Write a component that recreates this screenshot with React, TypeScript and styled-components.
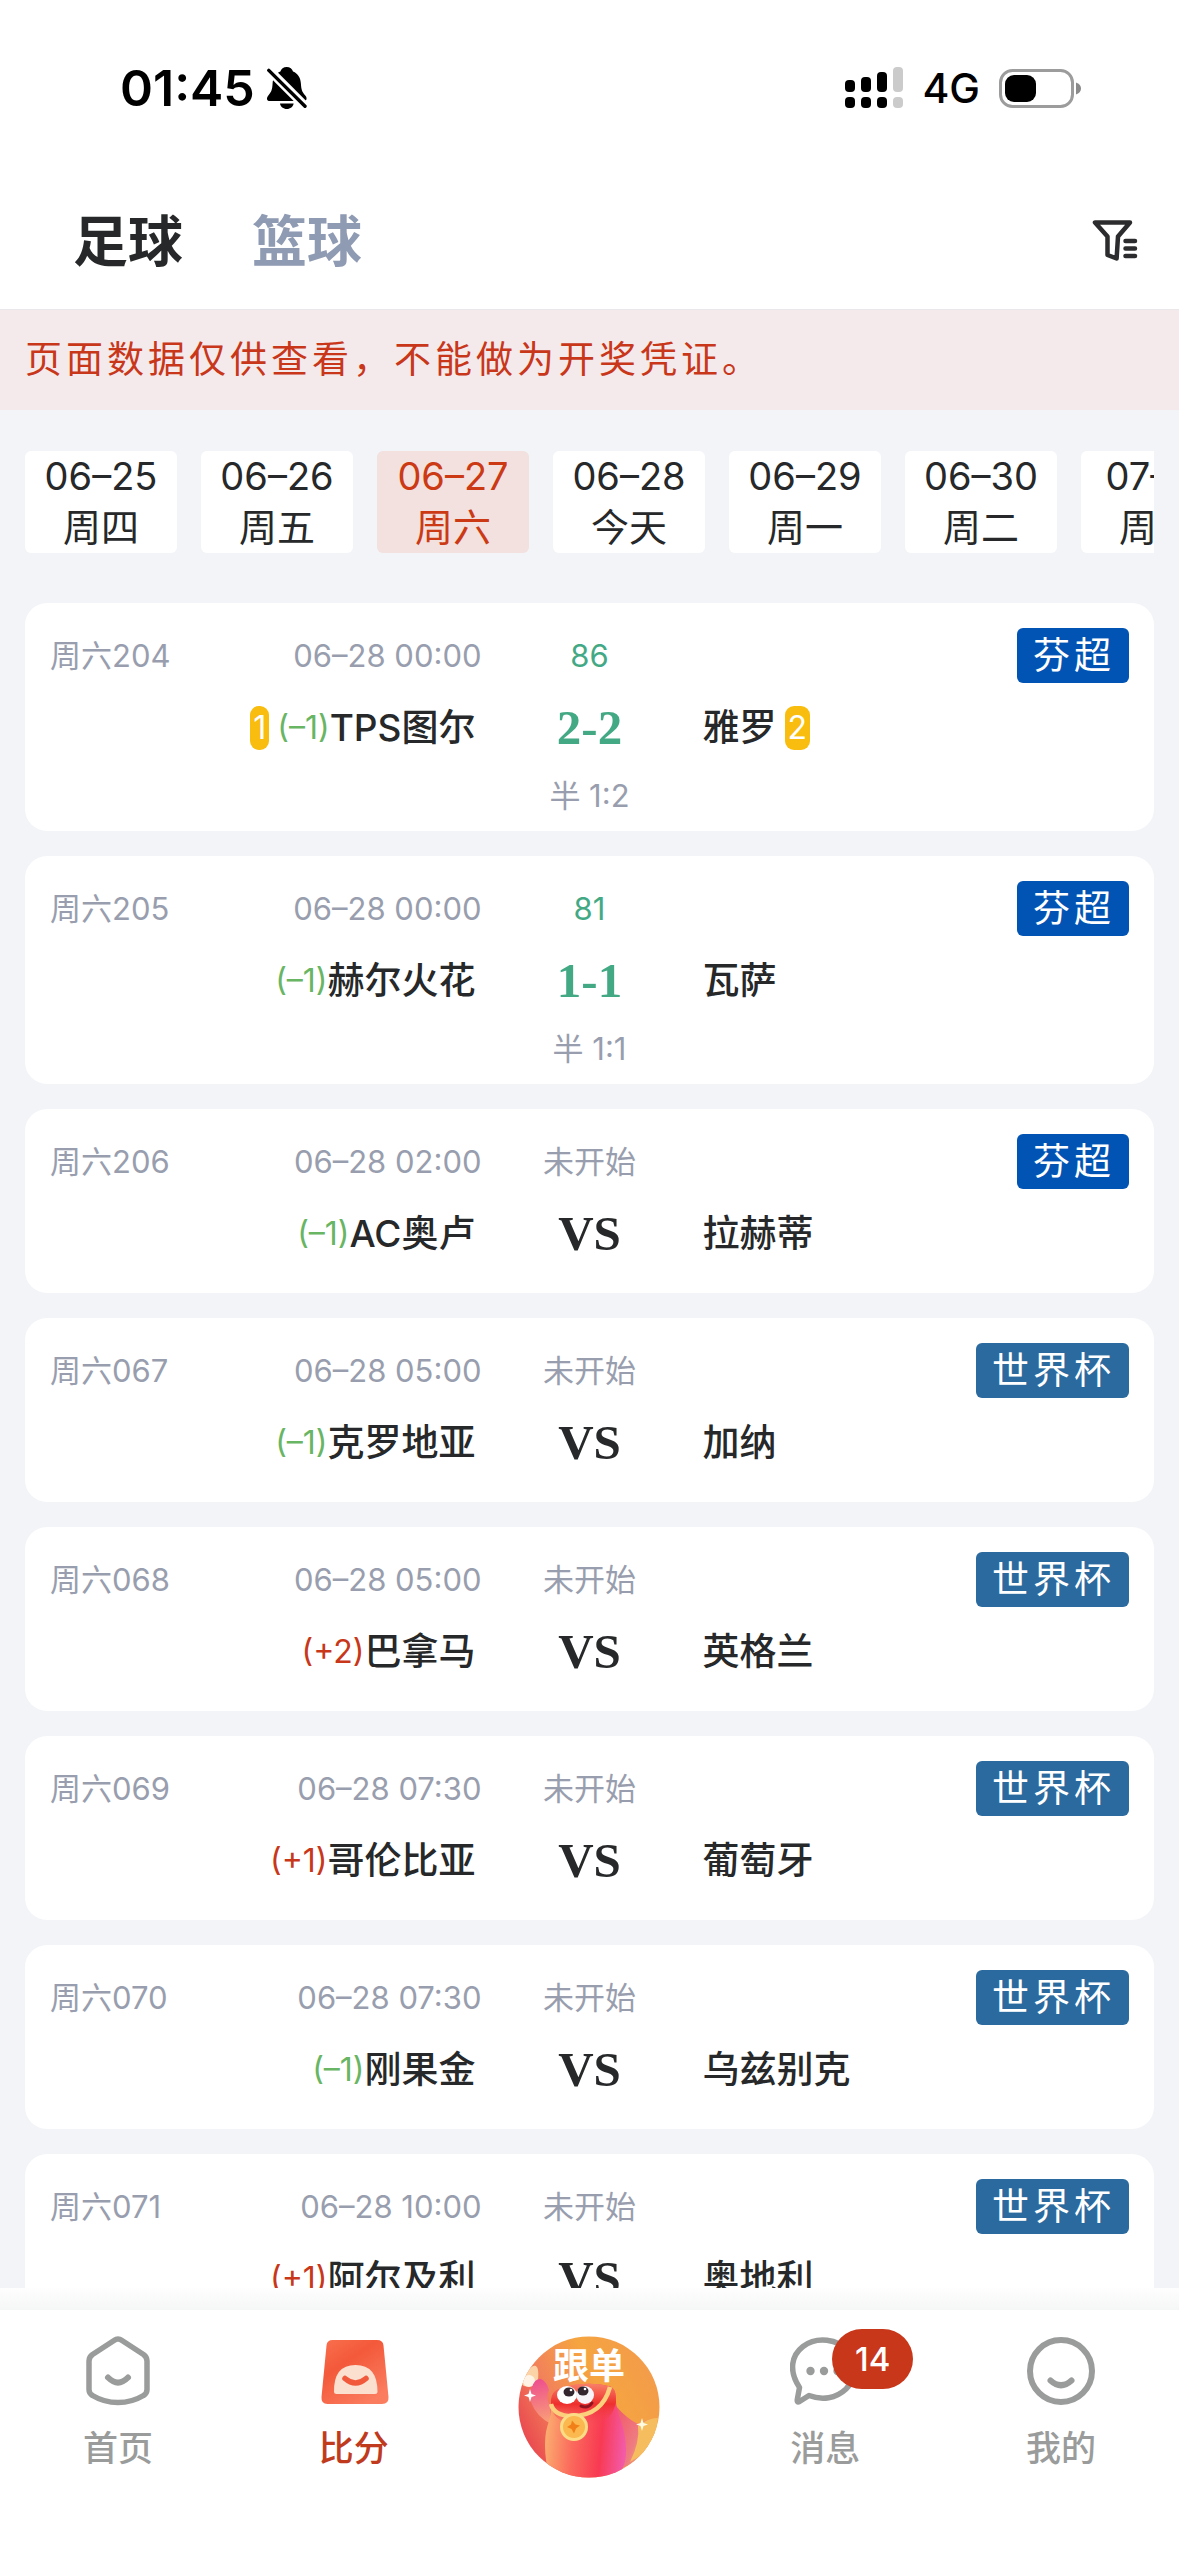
import React, { useState } from "react";
import styled, { createGlobalStyle, css } from "styled-components";

const colors = {
  ink: "#262829",
  muted: "#989eae",
  tabIdle: "#8f9bb3",
  red: "#c8371a",
  green: "#43a985",
  handicapDown: "#68b563",
  page: "#f3f4f8",
  nav: "#9a9c9b",
};

const GlobalStyle = createGlobalStyle`
  *, *::before, *::after { box-sizing: border-box; }
  body {
    margin: 0;
    background: ${colors.page};
    color: ${colors.ink};
    font-family: Inter, "Noto Sans CJK SC", sans-serif;
  }
  button { font: inherit; border: 0; padding: 0; background: none; color: inherit; cursor: pointer; }
  a { color: inherit; text-decoration: none; }
  ul { list-style: none; margin: 0; padding: 0; }
  svg { display: block; flex: none; }
`;

const Screen = styled.div`
  display: flex;
  flex-direction: column;
  height: 100vh;
  overflow: hidden;
`;

/* ---------- status bar ---------- */

const StatusBar = styled.div`
  display: flex;
  justify-content: space-between;
  align-items: center;
  flex: none;
  height: 176px;
  padding: 0 98px 0 120px;
  background: #fff;
  color: #000;
`;

const StatusGroup = styled.div<{ $gap: number }>`
  display: flex;
  align-items: center;
  gap: ${(p) => p.$gap}px;
`;

const Clock = styled.time`
  font-size: 50px;
  line-height: 60px;
  font-weight: 600;
`;

const Network = styled.span`
  font-size: 41px;
  line-height: 50px;
  font-weight: 500;
`;

/* ---------- header ---------- */

const Header = styled.header`
  display: flex;
  justify-content: space-between;
  align-items: center;
  flex: none;
  height: 134px;
  padding: 0 39px 4px 73px;
  background: #fff;
  border-bottom: 1px solid #e9e7ea;
`;

const SportTabs = styled.nav`
  display: flex;
  gap: 69px;
`;

const SportTab = styled.button<{ $active: boolean }>`
  font-size: 55px;
  line-height: 80px;
  font-weight: 700;
  color: ${(p) => (p.$active ? colors.ink : colors.tabIdle)};
`;

const Notice = styled.p`
  flex: none;
  margin: 0;
  padding: 0 25px;
  background: #f4eaec;
  color: ${colors.red};
  font-size: 37px;
  line-height: 100px;
  letter-spacing: 4px;
`;

/* ---------- content ---------- */

const Main = styled.main`
  flex: 1;
  min-height: 0;
  padding: 41px 25px 0;
  overflow: auto;
  scrollbar-width: none;
`;

const DateStrip = styled.div`
  display: flex;
  gap: 24px;
  margin-bottom: 50px;
  overflow-x: auto;
  scrollbar-width: none;
`;

const DateChip = styled.button<{ $active: boolean }>`
  display: flex;
  flex-direction: column;
  align-items: center;
  flex: none;
  width: 152px;
  border-radius: 6px;
  font-size: 38px;
  line-height: 51px;
  background: ${(p) => (p.$active ? "#f2e1de" : "#fff")};
  color: ${(p) => (p.$active ? "#cb3a14" : colors.ink)};
`;

const MatchList = styled.ul`
  display: flex;
  flex-direction: column;
  gap: 25px;
`;

const Card = styled.li`
  padding: 25px 25px 16px;
  border-radius: 22px;
  background: #fff;
`;

const columns = css`
  display: grid;
  grid-template-columns: 1fr 216px 1fr;
  align-items: center;
`;

const InfoRow = styled.div`
  ${columns}
  height: 55px;
  font-size: 31px;
  line-height: 44px;
  color: ${colors.muted};
`;

const TeamsRow = styled.div`
  ${columns}
  height: 88px;
  padding-top: 1px;
`;

const IdAndTime = styled.div`
  display: flex;
  justify-content: space-between;
`;

const Phase = styled.span<{ $live: boolean }>`
  text-align: center;
  color: ${(p) => (p.$live ? colors.green : colors.muted)};
`;

const League = styled.span<{ $color: string }>`
  justify-self: end;
  padding: 0 14px 0 16px;
  border-radius: 6px;
  background: ${(p) => p.$color};
  color: #fff;
  font-size: 37px;
  line-height: 55px;
  letter-spacing: 4px;
`;

const Team = styled.div<{ $side: "home" | "away" }>`
  display: flex;
  align-items: center;
  justify-content: ${(p) => (p.$side === "home" ? "flex-end" : "flex-start")};
  padding: ${(p) => (p.$side === "home" ? "0 6px 0 0" : "0 0 0 5px")};
  white-space: nowrap;
`;

const TeamName = styled.span`
  font-size: 37px;
  line-height: 54px;
  font-weight: 500;
`;

const Handicap = styled.span<{ $up: boolean }>`
  font-size: 32px;
  line-height: 44px;
  color: ${(p) => (p.$up ? colors.red : colors.handicapDown)};
`;

const YellowCards = styled.span`
  margin: 0 8px;
  padding: 0 3px;
  border-radius: 9px;
  background: #f8bd0e;
  color: #fff;
  font-size: 32px;
  line-height: 44px;
`;

const Score = styled.strong<{ $live: boolean }>`
  text-align: center;
  font-family: "Liberation Serif", "Times New Roman", serif;
  font-size: 49px;
  line-height: 60px;
  font-weight: 700;
  color: ${(p) => (p.$live ? colors.green : colors.ink)};
`;

const HalfTime = styled.div`
  padding-top: 6px;
  text-align: center;
  font-size: 31px;
  line-height: 38px;
  color: ${colors.muted};
`;

/* ---------- bottom bar ---------- */

const BottomBar = styled.footer`
  flex: none;
  background: #fff;
`;

const BarShade = styled.div`
  height: 22px;
  background: linear-gradient(#fefefe, #f5f6f6);
`;

const BarItems = styled.nav`
  display: grid;
  grid-template-columns: repeat(5, 1fr);
  justify-items: center;
  align-items: start;
  padding: 26px 0 78px;
`;

const BarLink = styled.a<{ $active?: boolean }>`
  display: flex;
  flex-direction: column;
  align-items: center;
  gap: 19px;
  font-size: 35px;
  line-height: 46px;
  font-weight: 500;
  color: ${(p) => (p.$active ? "#c03a1e" : colors.nav)};
`;

const IconSlot = styled.span`
  position: relative;
`;

const Unread = styled.span`
  position: absolute;
  top: -7px;
  left: 42px;
  width: 81px;
  border-radius: 30px;
  background: ${colors.red};
  color: #fff;
  text-align: center;
  font-size: 33px;
  line-height: 60px;
`;

/* ---------- drawings ---------- */

const MutedBell = () => (
  <svg width="40" height="42" viewBox="0 0 40 42" aria-hidden="true">
    <path
      d="M19.7 0c3.2 0 5.6 2 6.3 4.6 5 2 7.6 6.4 7.9 12 .3 6 1.3 8.6 4.1 11.6 1.2 1.3 1.7 2.4 1.5 3.7-.2 1.4-1.2 2.1-2.8 2.1H2.8C1.2 34 .2 33.3 0 31.9c-.2-1.3.4-2.4 1.5-3.7C4.3 25.2 5.3 22.6 5.6 16.6c.3-5.6 2.9-10 7.8-12C14.1 2 16.5 0 19.7 0z"
      fill="#000"
    />
    <path d="M13 36.5h13.6c-.5 3.2-3.3 5.5-6.8 5.5S13.5 39.7 13 36.5z" fill="#000" />
    <path d="M-1 0 42 43" stroke="#fff" strokeWidth="9" />
    <path d="M1.8 3.4 38 39.3" stroke="#000" strokeWidth="3.4" strokeLinecap="round" />
  </svg>
);

const Signal = () => (
  <svg width="58" height="42" viewBox="0 0 58 42" aria-hidden="true">
    <g fill="#000">
      <rect x="0" y="13" width="10" height="12" rx="4" />
      <rect x="16" y="10" width="10" height="15" rx="4" />
      <rect x="32" y="5" width="10" height="20" rx="4" />
      <rect x="0" y="30" width="10" height="11" rx="4" />
      <rect x="16" y="30" width="10" height="11" rx="4" />
      <rect x="32" y="30" width="10" height="11" rx="4" />
    </g>
    <g fill="#cbcbcb">
      <rect x="48" y="0" width="10" height="25" rx="4" />
      <rect x="48" y="30" width="10" height="11" rx="4" />
    </g>
  </svg>
);

const Battery = () => (
  <svg width="82" height="39" viewBox="0 0 82 39" aria-hidden="true">
    <rect x="1.5" y="1.5" width="72" height="36" rx="12" fill="none" stroke="#9c9c9c" strokeWidth="3" />
    <rect x="6" y="6" width="31" height="27" rx="9" fill="#000" />
    <path d="M77 13.5c3 1 5 3.2 5 6s-2 5-5 6z" fill="#8a8a8a" />
  </svg>
);

const FilterIcon = () => (
  <svg
    width="50"
    height="52"
    viewBox="0 0 50 52"
    fill="none"
    stroke="#2c2c2e"
    strokeWidth="4.5"
    strokeLinejoin="round"
    strokeLinecap="round"
    aria-hidden="true"
  >
    <path d="M5 7.5H40L28 21.5 26.6 43.5 17.5 40V21.5Z" />
    <path d="M35.5 26h9.5M35.5 33.5h9.5M35.5 41h9.5" />
  </svg>
);

const HomeIcon = () => (
  <svg
    width="70"
    height="70"
    viewBox="0 0 70 70"
    fill="none"
    stroke={colors.nav}
    strokeLinecap="round"
    strokeLinejoin="round"
    aria-hidden="true"
  >
    <path
      d="M31 4.500Q35 1.500 39 4.500L60.500 18.500Q64 21 64 25V53.500Q64 57.500 60.500 59.500 49 66.500 35 66.500T9.500 59.500Q6 57.500 6 53.500V25Q6 21 9.500 18.500Z"
      strokeWidth="5.5"
    />
    <path d="M25 41.5Q35 51.5 45 41.5" strokeWidth="6" />
  </svg>
);

const ScoreIcon = () => (
  <svg width="70" height="70" viewBox="0 0 70 70" aria-hidden="true">
    <defs>
      <linearGradient id="scoreFill" x1="0" y1="0" x2="0.7" y2="1">
        <stop offset="0" stopColor="#f9714f" />
        <stop offset="0.4" stopColor="#f3593a" />
        <stop offset="1" stopColor="#fb7d60" />
      </linearGradient>
    </defs>
    <path d="M13.5 4H58Q64 4 64.5 9.5L69.500 61Q70 68 63 68H8.500Q2 68 2.500 61L7.500 9.500Q8 4 13.5 4Z" fill="url(#scoreFill)" />
    <path d="M15 56Q14.5 29 36.5 29T58.5 56Q58.5 58 56 58H17.5Q15 58 15 56Z" fill="#fbe0d0" />
    <path d="M26 42.5Q36.5 51.5 47 42.5" fill="none" stroke="#f2583a" strokeWidth="5.5" strokeLinecap="round" />
  </svg>
);

const MessageIcon = () => (
  <svg width="70" height="70" viewBox="0 0 70 70" aria-hidden="true">
    <path
      d="M9.5 51.5C-2 34 2 19 13 10.5 27 0 48 3 57.5 15 67 27 66 43 56 53 46 62.5 32 64.5 19 59.5L9.5 65.5C7.5 66.5 7 65.5 7.3 63.5Z"
      fill="none"
      stroke={colors.nav}
      strokeWidth="5.5"
      strokeLinejoin="round"
    />
    <g fill={colors.nav}>
      <circle cx="20.5" cy="35" r="4.2" />
      <circle cx="34" cy="35" r="4.2" />
      <circle cx="47.5" cy="35" r="4.2" />
    </g>
  </svg>
);

const ProfileIcon = () => (
  <svg
    width="70"
    height="70"
    viewBox="0 0 70 70"
    fill="none"
    stroke={colors.nav}
    strokeWidth="6"
    strokeLinecap="round"
    aria-hidden="true"
  >
    <circle cx="35" cy="35" r="31" />
    <path d="M24.5 44.5Q35 54 45.5 44.5" />
  </svg>
);

const Mascot = () => (
  <svg width="142" height="142" viewBox="0 0 142 142" role="img" aria-label="跟单">
    <defs>
      <clipPath id="disc">
        <circle cx="71" cy="71" r="70.5" />
      </clipPath>
      <linearGradient id="discFill" x1="0" y1="0.7" x2="1" y2="0.2">
        <stop offset="0" stopColor="#e9444e" />
        <stop offset="0.3" stopColor="#f2825a" />
        <stop offset="0.6" stopColor="#f5a540" />
        <stop offset="1" stopColor="#f39a4c" />
      </linearGradient>
      <linearGradient id="bodyFill" x1="0" y1="0.45" x2="1" y2="0.55">
        <stop offset="0" stopColor="#fbb070" />
        <stop offset="0.35" stopColor="#fb6a5c" />
        <stop offset="0.7" stopColor="#f83a52" />
        <stop offset="1" stopColor="#f35aa8" />
      </linearGradient>
      <linearGradient id="headFill" x1="0" y1="0" x2="0" y2="1">
        <stop offset="0" stopColor="#f98068" />
        <stop offset="0.5" stopColor="#ee2f2c" />
        <stop offset="1" stopColor="#f6465a" stopOpacity="0" />
      </linearGradient>
      <linearGradient id="armFill" x1="0.5" y1="0" x2="0.6" y2="1">
        <stop offset="0" stopColor="#ee4f8e" />
        <stop offset="1" stopColor="#f9a077" />
      </linearGradient>
      <linearGradient id="wingFill" x1="0" y1="0" x2="1" y2="0.6">
        <stop offset="0" stopColor="#f2566a" />
        <stop offset="0.6" stopColor="#ee7c80" />
        <stop offset="1" stopColor="#f8c565" />
      </linearGradient>
    </defs>
    <g clipPath="url(#disc)">
      <rect width="142" height="142" fill="url(#discFill)" />
      <path d="M10 34Q22 22 20 44L12 50Q2 52 4 44Z" fill="#fbd3a6" />
      <circle cx="11" cy="45" r="6" fill="#fff3e6" />
      <path d="M14 51Q17 42 23 43 29 46 31 54 27 60 32 70L33 88Q18 80 13 66 10 58 14 51Z" fill="url(#armFill)" />
      <path d="M98 70Q108 82 120 88 128 84 138 82L136 112Q122 124 104 132Z" fill="url(#wingFill)" />
      <path d="M120 90Q130 82 140 82L136 108Q126 118 112 126 122 106 120 90Z" fill="#f6bd5e" />
      <path
        d="M33 68C32 56 38 52 50 50 64 47 78 47 90 50 97 51 98 57 98 66 99 80 108 90 108 114 108 128 104 136 98 142H32C27 126 26 108 28 96 30 86 34 80 33 68Z"
        fill="url(#bodyFill)"
      />
      <path d="M33 68C32 56 38 52 50 50 64 47 78 47 90 50 97 51 98 57 98 66 94 86 80 90 62 88 44 88 34 82 33 68Z" fill="url(#headFill)" />
      <path d="M33 68Q36 80 54 80 84 80 92 51" fill="none" stroke="#fbcf7c" strokeWidth="4.5" />
      <ellipse cx="49" cy="59" rx="10" ry="9" fill="#fff" />
      <ellipse cx="67" cy="59" rx="9" ry="9" fill="#f6f4f8" />
      <ellipse cx="51" cy="56" rx="5.5" ry="4.5" fill="#33262e" />
      <ellipse cx="65" cy="55" rx="5.5" ry="4.5" fill="#33262e" />
      <circle cx="53" cy="54" r="1.3" fill="#fff" />
      <circle cx="67" cy="53" r="1.3" fill="#fff" />
      <path d="M63 70Q70 73 74 67" fill="none" stroke="#8e1420" strokeWidth="3" strokeLinecap="round" />
      <circle cx="56" cy="91" r="12.5" fill="#fab84e" stroke="#fddc86" strokeWidth="3" />
      <path d="M54 84.5 57.5 88.5 62 89.5 58 92.5 56 97.5 53.5 93 49 91 53 88.5Z" fill="#f28018" />
      <path d="M12 53 13.5 58 18 59.5 13.5 61 12 66 10.5 61 6 59.5 10.5 58Z" fill="#fff" />
      <path d="M124 82 125.5 87 130 88.5 125.5 90 124 95 122.5 90 118 88.5 122.5 87Z" fill="#fffbe0" />
    </g>
    <text x="71" y="43" textAnchor="middle" fontSize="36" fontWeight="700" fill="#fff">
      跟单
    </text>
  </svg>
);

/* ---------- data ---------- */

type Match = {
  id: string;
  time: string;
  phase: string;
  live?: boolean;
  league: "芬超" | "世界杯";
  handicap: string;
  home: string;
  away: string;
  score: string;
  half?: string;
  homeCards?: number;
  awayCards?: number;
};

const leagueColors = { 芬超: "#0254b4", 世界杯: "#2b6a9e" };

const dates = [
  ["06–25", "周四"],
  ["06–26", "周五"],
  ["06–27", "周六"],
  ["06–28", "今天"],
  ["06–29", "周一"],
  ["06–30", "周二"],
  ["07–01", "周三"],
];

const matches: Match[] = [
  { id: "周六204", time: "06–28 00:00", phase: "86", live: true, league: "芬超", handicap: "(–1)", home: "TPS图尔", away: "雅罗", score: "2-2", half: "半 1:2", homeCards: 1, awayCards: 2 },
  { id: "周六205", time: "06–28 00:00", phase: "81", live: true, league: "芬超", handicap: "(–1)", home: "赫尔火花", away: "瓦萨", score: "1-1", half: "半 1:1" },
  { id: "周六206", time: "06–28 02:00", phase: "未开始", league: "芬超", handicap: "(–1)", home: "AC奥卢", away: "拉赫蒂", score: "VS" },
  { id: "周六067", time: "06–28 05:00", phase: "未开始", league: "世界杯", handicap: "(–1)", home: "克罗地亚", away: "加纳", score: "VS" },
  { id: "周六068", time: "06–28 05:00", phase: "未开始", league: "世界杯", handicap: "(+2)", home: "巴拿马", away: "英格兰", score: "VS" },
  { id: "周六069", time: "06–28 07:30", phase: "未开始", league: "世界杯", handicap: "(+1)", home: "哥伦比亚", away: "葡萄牙", score: "VS" },
  { id: "周六070", time: "06–28 07:30", phase: "未开始", league: "世界杯", handicap: "(–1)", home: "刚果金", away: "乌兹别克", score: "VS" },
  { id: "周六071", time: "06–28 10:00", phase: "未开始", league: "世界杯", handicap: "(+1)", home: "阿尔及利", away: "奥地利", score: "VS" },
];

const MatchCard = ({ match }: { match: Match }) => {
  const live = Boolean(match.live);
  return (
    <Card>
      <InfoRow>
        <IdAndTime>
          <span>{match.id}</span>
          <time>{match.time}</time>
        </IdAndTime>
        <Phase $live={live}>{match.phase}</Phase>
        <League $color={leagueColors[match.league]}>{match.league}</League>
      </InfoRow>
      <TeamsRow>
        <Team $side="home">
          {match.homeCards && <YellowCards>{match.homeCards}</YellowCards>}
          <Handicap $up={match.handicap.includes("+")}>{match.handicap}</Handicap>
          <TeamName>{match.home}</TeamName>
        </Team>
        <Score $live={live}>{match.score}</Score>
        <Team $side="away">
          <TeamName>{match.away}</TeamName>
          {match.awayCards && <YellowCards>{match.awayCards}</YellowCards>}
        </Team>
      </TeamsRow>
      {match.half && <HalfTime>{match.half}</HalfTime>}
    </Card>
  );
};

export default function App() {
  const [sport, setSport] = useState("足球");
  const [date, setDate] = useState("06–27");

  return (
    <Screen>
      <GlobalStyle />
      <StatusBar>
        <StatusGroup $gap={12}>
          <Clock>01:45</Clock>
          <MutedBell />
        </StatusGroup>
        <StatusGroup $gap={19}>
          <Signal />
          <Network>4G</Network>
          <Battery />
        </StatusGroup>
      </StatusBar>

      <Header>
        <SportTabs>
          {["足球", "篮球"].map((name) => (
            <SportTab key={name} $active={sport === name} onClick={() => setSport(name)}>
              {name}
            </SportTab>
          ))}
        </SportTabs>
        <button aria-label="筛选">
          <FilterIcon />
        </button>
      </Header>

      <Notice>页面数据仅供查看，不能做为开奖凭证。</Notice>

      <Main>
        <DateStrip>
          {dates.map(([day, label]) => (
            <DateChip key={day} $active={date === day} onClick={() => setDate(day)}>
              <span>{day}</span>
              <span>{label}</span>
            </DateChip>
          ))}
        </DateStrip>
        <MatchList>
          {matches.map((match) => (
            <MatchCard key={match.id} match={match} />
          ))}
        </MatchList>
      </Main>

      <BottomBar>
        <BarShade />
        <BarItems>
          <BarLink href="#home">
            <HomeIcon />
            首页
          </BarLink>
          <BarLink href="#scores" $active>
            <ScoreIcon />
            比分
          </BarLink>
          <BarLink href="#follow">
            <Mascot />
          </BarLink>
          <BarLink href="#messages">
            <IconSlot>
              <MessageIcon />
              <Unread>14</Unread>
            </IconSlot>
            消息
          </BarLink>
          <BarLink href="#me">
            <ProfileIcon />
            我的
          </BarLink>
        </BarItems>
      </BottomBar>
    </Screen>
  );
}
